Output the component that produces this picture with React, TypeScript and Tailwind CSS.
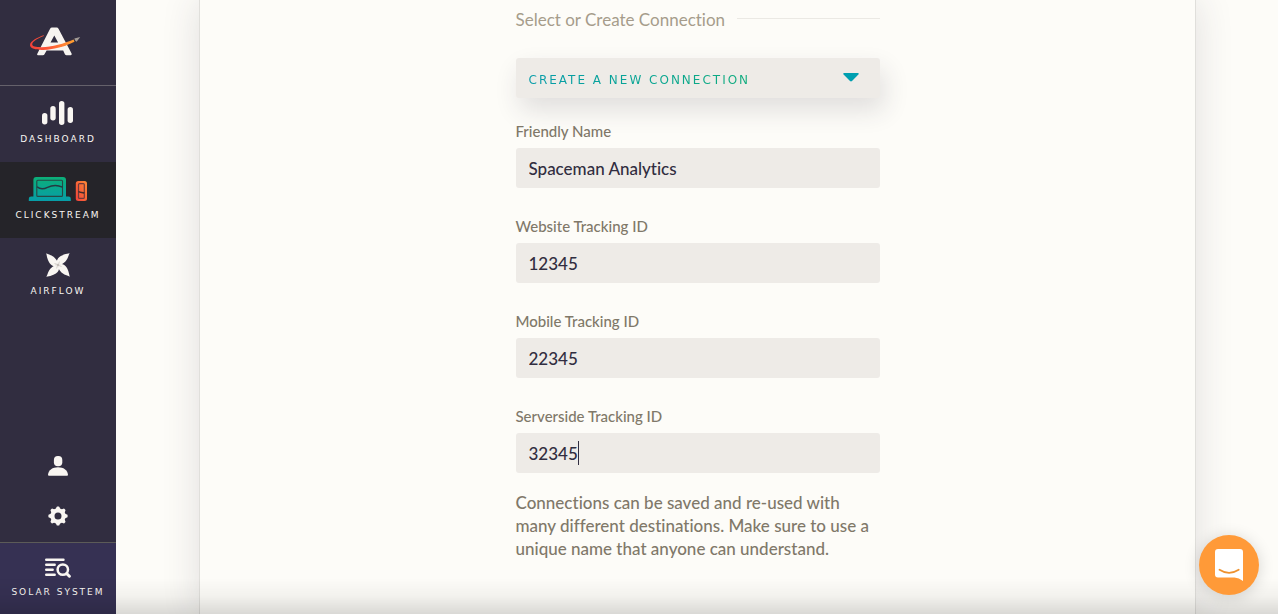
import { useState } from "react";
import type { ReactNode } from "react";

function Logo() {
  return (
    <svg viewBox="28 24 54 34" className="h-[34px] w-[54px]" role="img" aria-label="Home">
      <defs>
        <linearGradient id="orbit" x1="30" y1="0" x2="75" y2="0" gradientUnits="userSpaceOnUse">
          <stop offset="0" stopColor="#f0403a" />
          <stop offset=".45" stopColor="#ff5a36" />
          <stop offset="1" stopColor="#ffa32f" />
        </linearGradient>
      </defs>
      <path
        fill="#f7f4f0"
        fillRule="evenodd"
        d="M52 27.500h4.600q1.300 0 1.900 1.200L71.600 53.600q.6 1.700-1 1.700h-4q-1.200 0-1.700-1L63.200 50.500H46.600L44.500 54.300q-.5 1-1.700 1h-4.600q-1.700 0-.9-1.600L50.100 28.700q.6-1.200 1.900-1.200ZM54.300 35.500 50.500 42.500h7.600Z"
      />
      <path
        fill="none"
        stroke="#312d40"
        strokeWidth="1"
        d="M45 47.800C56 47.600 66 45 74.500 41.800"
      />
      <path
        fill="url(#orbit)"
        d="M43.800 35.200C37.500 37.300 29.600 41.200 30 45.300C30.400 49 37 50.100 43 49.900C55 49.500 66 46 74.500 41.700L73.600 39.600C64 43.600 52 47.300 41 47.200C36 47.200 32.300 46.600 32.200 44.300C32.200 41.500 38.500 38 43.800 36Z"
      />
      <path fill="#a39c96" d="M74.300 38.500 80.200 37.100 76.600 41.700 75.300 40.700Z" />
    </svg>
  );
}

function DashboardIcon() {
  return (
    <svg viewBox="0 0 32 24" className="h-6 w-8" fill="#f9f6f2" aria-hidden="true">
      <rect x="0" y="12" width="5.400" height="11.400" rx="2.700" />
      <rect x="8.300" y="5" width="5.400" height="14.500" rx="2.700" />
      <rect x="17" y="0" width="5.400" height="24" rx="2.700" />
      <rect x="25.600" y="6" width="5.400" height="16" rx="2.700" />
    </svg>
  );
}

function ClickstreamIcon() {
  return (
    <svg viewBox="0 0 60 24" className="h-6 w-[60px]" fill="none" aria-hidden="true">
      <defs>
        <linearGradient id="laptop" x1="0" y1="0" x2="0" y2="1">
          <stop offset="0" stopColor="#0caf78" />
          <stop offset="1" stopColor="#079da8" />
        </linearGradient>
        <linearGradient id="phone" x1="1" y1="0" x2="0" y2="1">
          <stop offset="0" stopColor="#ff8a35" />
          <stop offset="1" stopColor="#f2403a" />
        </linearGradient>
      </defs>
      <path
        fill="url(#laptop)"
        d="M8.200 0H35a3 3 0 0 1 3 3v16.500h2.500a2.300 2.300 0 0 1 2.300 2.300V24H.800v-2.200a2.300 2.300 0 0 1 2.300-2.300h2.300V3a3 3 0 0 1 2.800-3Z"
      />
      <rect x="8.800" y="3.200" width="25.700" height="16.200" rx="1" stroke="#264844" strokeWidth="1.100" />
      <path d="M9 9.800c3 2.600 6.500 2.600 10.500.600s9-3 15-.3" stroke="#263940" strokeWidth="1.500" />
      <rect x="47.800" y="4" width="11.200" height="20" rx="2.500" fill="url(#phone)" />
      <rect x="50.500" y="6.600" width="5.800" height="14.800" rx="1" stroke="#70383a" strokeWidth="1.200" />
      <path d="M50.500 14.500c2 1.700 4 .2 5.800 1.700" stroke="#3f2a2d" strokeWidth="1.500" />
    </svg>
  );
}

function AirflowIcon() {
  return (
    <svg viewBox="-12 -12 24 24" className="h-6 w-6" aria-hidden="true">
      {[0, 90, 180, 270].map((angle) => (
        <g key={angle} transform={`rotate(${angle})`}>
          <path fill="#f9f6f2" d="M0 0C-3-4.500 0-10 11.700-11.700C9.500-8.500 10.500-4.500 3.500-.5Z" />
          <path fill="#d8d3ce" d="M0 0C0-1.500.5-2.800 1.500-4C2-2.500 1.500-1 0 0Z" />
        </g>
      ))}
      <circle r="1.100" fill="#bdb6b0" />
    </svg>
  );
}

function UserIcon() {
  return (
    <svg viewBox="0 0 20 20" className="h-5 w-5" fill="#f9f6f2" aria-hidden="true">
      <rect x="5.900" y="0" width="8.400" height="10.300" rx="4" />
      <path d="M0 18.700C.6 14 4.500 11.300 10 11.300S19.400 14 20 18.700q0 1-1 1H1q-1 0-1-1Z" />
    </svg>
  );
}

function GearIcon() {
  return (
    <svg viewBox="-10 -10 20 20" className="h-5 w-5" aria-hidden="true">
      <circle r="5.600" fill="none" stroke="#f9f6f2" strokeWidth="4.200" />
      {[0, 45, 90, 135, 180, 225, 270, 315].map((angle) => (
        <path
          key={angle}
          transform={`rotate(${angle})`}
          fill="#f9f6f2"
          d="M-2.300-7-1.400-9q.2-.6.700-.6h1.400q.5 0 .7.600L2.300-7Z"
        />
      ))}
    </svg>
  );
}

function SolarIcon() {
  return (
    <svg viewBox="0 0 26 20" className="h-5 w-[26px]" fill="none" stroke="#f9f6f2" strokeLinecap="round" aria-hidden="true">
      <path strokeWidth="2.400" d="M1.200 1.700h17.300M1.200 6.700h8.500M1.200 11.700h6.500M1.200 16.700h8.500" />
      <circle cx="17.800" cy="11.600" r="5.200" strokeWidth="2.500" />
      <path strokeWidth="2.900" d="m21.700 15.600 2.700 2.700" />
    </svg>
  );
}

const navText = "text-[9px] leading-3 tracking-[2px] text-[#f9f6f2] uppercase whitespace-nowrap";

function NavItem({ label, active, children }: { label: string; active?: boolean; children: ReactNode }) {
  return (
    <a
      href="#"
      aria-current={active ? "page" : undefined}
      className={`flex h-[76px] flex-col items-center gap-2 pt-[15px] ${active ? "bg-[#252429]" : ""}`}
    >
      {children}
      <span className={navText}>{label}</span>
    </a>
  );
}

function Sidebar() {
  return (
    <nav className="flex w-[116px] shrink-0 flex-col bg-[#312d40] font-['DejaVu_Sans',sans-serif]">
      <a href="#" className="flex h-[86px] items-center justify-center border-b border-[#65616b] pr-1.5 pb-1">
        <Logo />
      </a>
      <NavItem label="Dashboard">
        <DashboardIcon />
      </NavItem>
      <NavItem label="Clickstream" active>
        <ClickstreamIcon />
      </NavItem>
      <NavItem label="Airflow">
        <AirflowIcon />
      </NavItem>
      <div className="mt-auto flex flex-col items-center gap-[30px] pb-4">
        <button type="button" aria-label="Account">
          <UserIcon />
        </button>
        <button type="button" aria-label="Settings">
          <GearIcon />
        </button>
      </div>
      <a
        href="#"
        className="flex h-[72px] flex-col items-center gap-2 border-t border-[#5c5b58] bg-[#363153] pt-[15px]"
      >
        <SolarIcon />
        <span className={navText}>Solar System</span>
      </a>
    </nav>
  );
}

type FieldProps = { id: string; label: string; initial: string; showCaret?: boolean };

function Field({ id, label, initial, showCaret }: FieldProps) {
  const [value, setValue] = useState(initial);
  return (
    <div className="flex flex-col gap-[7px]">
      <label htmlFor={id} className="text-[15px] leading-5 font-medium text-[#807869]">
        {label}
      </label>
      <div className="relative">
        <input
          id={id}
          type="text"
          value={value}
          onChange={(e) => setValue(e.target.value)}
          className="peer block h-10 w-full rounded-[3px] bg-[#eeebe7] px-[13px] text-[17px] font-medium text-[#312d40] outline-none"
        />
        {showCaret && value === initial && (
          <span className="pointer-events-none absolute top-2 left-[13px] h-6 border-r border-[#312d40] text-[17px] font-medium text-transparent select-none peer-focus:hidden" aria-hidden="true">
            {value}
          </span>
        )}
      </div>
    </div>
  );
}

export default function App() {
  return (
    <div className="flex h-screen overflow-hidden bg-[#fdfcf8] font-[Lato,sans-serif] [font-variant-ligatures:none]">
      <Sidebar />
      <main className="relative flex min-w-0 flex-1 pr-[82px] pl-[83px]">
        <section className="flex flex-1 justify-center border-x border-[#e0dfdb] bg-[#fdfcf8] shadow-[0_0_36px_rgba(49,45,64,0.14)]">
          <form className="w-full max-w-[364px] pt-2" onSubmit={(e) => e.preventDefault()}>
            <div className="flex items-center gap-3">
              <h2 className="text-[17px] leading-6 text-[#a69c8b]">Select or Create Connection</h2>
              <hr className="mb-1 flex-1 border-[#ebe9e4]" />
            </div>
            <div className="relative mt-[26px] rounded-[3px] bg-[#eeebe7] shadow-[4px_12px_26px_rgba(49,45,64,0.14)]">
              <select
                aria-label="Connection"
                className="block h-10 w-full appearance-none bg-linear-to-r from-[#079ca8] from-5% to-[#12ad78] to-70% bg-clip-text px-[13px] pt-1 font-['DejaVu_Sans',sans-serif] text-[12px] tracking-[2px] text-transparent uppercase outline-none"
              >
                <option className="text-[#079ca8]">Create a new connection</option>
              </select>
              <svg viewBox="0 0 16 9" className="pointer-events-none absolute top-[15px] right-[21px] h-[9px] w-4" fill="#009fb0" aria-hidden="true">
                <path d="M1 0h14q1.200.4.400 1.500L9 8q-1 .9-2 0L.6 1.500Q-.2.400 1 0Z" />
              </svg>
            </div>
            <div className="mt-[23px] flex flex-col gap-7">
              <Field id="friendly-name" label="Friendly Name" initial="Spaceman Analytics" />
              <Field id="website-id" label="Website Tracking ID" initial="12345" />
              <Field id="mobile-id" label="Mobile Tracking ID" initial="22345" />
              <Field id="serverside-id" label="Serverside Tracking ID" initial="32345" showCaret />
            </div>
            <p className="mt-[18px] text-[17px] leading-[23px] font-medium text-[#807869]">
              Connections can be saved and re-used with many different destinations. Make sure to use a unique name
              that anyone can understand.
            </p>
          </form>
        </section>
      </main>
      <div className="pointer-events-none fixed inset-x-0 bottom-0 h-9 bg-linear-to-t from-black/14 via-black/4 to-transparent" />
      <button
        type="button"
        aria-label="Open chat"
        className="fixed right-[19px] bottom-[19px] flex size-[60px] items-center justify-center rounded-full bg-[#ff9a38] shadow-[0_2px_16px_rgba(0,0,0,0.16)]"
      >
        <svg viewBox="0 0 28 32" className="h-8 w-7" aria-hidden="true">
          <path fill="#fff" d="M3 0h22a3 3 0 0 1 3 3v29q-4-2.900-8.500-3.400H3a3 3 0 0 1-3-3V3a3 3 0 0 1 3-3Z" />
          <path d="M4.500 20.800q9.500 6.200 19.200 0" fill="none" stroke="#ee922f" strokeWidth="1.800" strokeLinecap="round" />
        </svg>
      </button>
    </div>
  );
}
